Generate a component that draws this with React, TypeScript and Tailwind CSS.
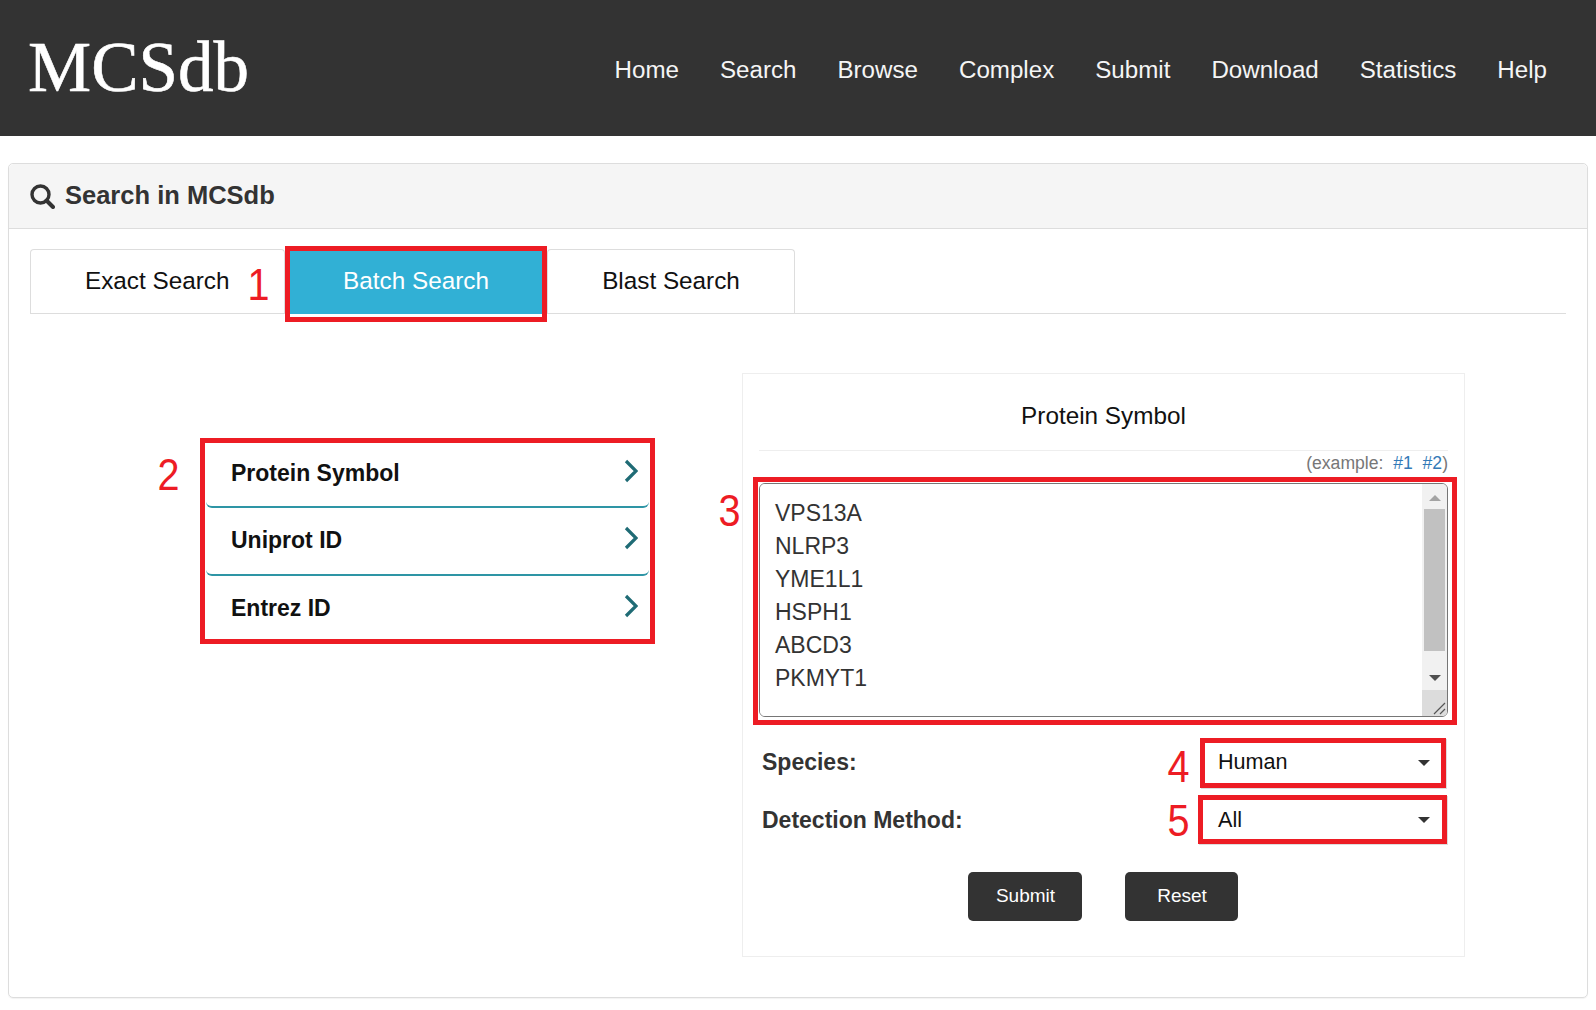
const navItems = ["Home", "Search", "Browse", "Complex", "Submit", "Download", "Statistics", "Help"];
const searchTypes = [
  { name: "Protein Symbol", rowClass: "h-[65px] pb-[3px] rounded-b-[6px] border-b-2 border-[#2e95a5]" },
  { name: "Uniprot ID", rowClass: "h-[68px] pb-[2px] rounded-b-[6px] border-b-2 border-[#2e95a5]" },
  { name: "Entrez ID", rowClass: "h-[63px] pt-[2px]" },
];
const sampleIds = ["VPS13A", "NLRP3", "YME1L1", "HSPH1", "ABCD3", "PKMYT1"];

function Mark({ children, className }: { children: string; className: string }) {
  return (
    <span className={`absolute scale-x-[0.88] text-[45px] font-normal leading-none text-[#ed1c24] ${className}`}>
      {children}
    </span>
  );
}

function Caret() {
  return (
    <svg width="12" height="6" viewBox="0 0 12 6" className="fill-[#333]">
      <path d="M0 0h12L6 6z" />
    </svg>
  );
}

function FakeScrollbar() {
  return (
    <div className="flex w-[25px] shrink-0 flex-col bg-[#f1f1f1]">
      <div className="flex h-[25px] items-start justify-center pl-px pt-[11px]">
        <svg width="12" height="6" viewBox="0 0 12 6" className="fill-[#a3a3a3]">
          <path d="M6 0l6 6H0z" />
        </svg>
      </div>
      <div className="ml-[2px] mr-[2px] h-[142px] bg-[#c1c1c1]" />
      <div className="flex flex-1 items-start justify-center pl-px pt-[24px]">
        <svg width="12" height="6" viewBox="0 0 12 6" className="fill-[#505050]">
          <path d="M0 0h12L6 6z" />
        </svg>
      </div>
      <div className="relative h-[26px] bg-[#dcdcdc]">
        <svg width="14" height="14" viewBox="0 0 14 14" className="absolute bottom-[1px] right-[1px] stroke-[#555]">
          <path d="M2 13L13 2M8 13l5-5" fill="none" strokeWidth="1.2" />
        </svg>
      </div>
    </div>
  );
}

export default function App() {
  return (
    <div className="min-h-[1010px] bg-white font-['Liberation_Sans',Arial,sans-serif] text-[#333]">
      <header className="flex h-[136px] items-center justify-between bg-[#333] pl-[28px] pr-[49px]">
        <div className="-mt-[2px] font-['Liberation_Serif',serif] text-[71px] leading-none text-white [-webkit-text-stroke:0.6px_white]">
          MCSdb
        </div>
        <nav className="flex gap-[41px] pt-[4px] text-[24.15px] text-[#f5f5f5]">
          {navItems.map((item) => (
            <a key={item}>{item}</a>
          ))}
        </nav>
      </header>

      <main className="mx-2 mt-[27px] h-[835px] rounded-[5px] border border-[#ddd] shadow-[0_1px_1px_rgba(0,0,0,0.05)]">
        <div className="flex h-[65px] items-center gap-[10px] rounded-t-[5px] border-b border-[#ddd] bg-[#f5f5f5] pl-[21px] text-[25.5px] font-bold">
          <svg width="25" height="25" viewBox="0 0 25 25" fill="none" className="stroke-[#333]">
            <circle cx="10.5" cy="10.5" r="8.5" strokeWidth="3.4" />
            <path d="M16.5 16.5l6.5 6.5" strokeWidth="4" strokeLinecap="round" />
          </svg>
          <span className="-mt-[2px]">Search in MCSdb</span>
        </div>

        <div className="pl-[21px] pr-[21px] pt-[20px]">
          <div className="flex h-[65px] items-start border-b border-[#ddd] text-[24.3px] text-[#111]">
            <div className="flex h-[64px] w-[255px] items-center rounded-t-[4px] border border-b-0 border-[#ddd] pl-[54px]">
              Exact Search
            </div>
            <div className="relative z-10 -mt-[3px] h-[76px] w-[262px] border-[5px] border-[#ed1c24] bg-white">
              <div className="flex h-[63px] items-center justify-center bg-[#31b0d5] pb-[3px] text-white">
                Batch Search
              </div>
              <Mark className="right-[calc(100%+19px)] top-[11px]">1</Mark>
            </div>
            <div className="flex h-[64px] w-[248px] items-center justify-center rounded-t-[4px] border border-b-0 border-[#ddd]">
              Blast Search
            </div>
          </div>

          <div className="flex items-start">
            <div className="relative ml-[170px] mt-[124px] h-[206px] w-[455px] border-[5px] border-[#ed1c24] px-[1px] text-[23px] font-bold text-[#111]">
              {searchTypes.map((item) => (
                <div key={item.name} className={`flex items-center justify-between pl-[25px] pr-[11px] ${item.rowClass}`}>
                  <span>{item.name}</span>
                  <svg width="14" height="24" viewBox="0 0 14 24" fill="none" className="-mt-[5px] stroke-[#1f6b75]">
                    <path d="M2 2l10 10L2 22" strokeWidth="3.2" />
                  </svg>
                </div>
              ))}
              <Mark className="right-[calc(100%+24px)] top-[9px]">2</Mark>
            </div>

            <div className="ml-[87px] mt-[59px] h-[584px] w-[723px] border border-[#eee] px-[16px]">
              <div className="flex h-[77px] items-center justify-center border-b border-[#eee] pt-[9px] text-[24.3px] text-[#111]">
                Protein Symbol
              </div>
              <div className="flex h-[26px] items-center justify-end pb-[2px] text-[17.6px] text-[#777]">
                (example:&nbsp;&nbsp;<a className="text-[#337ab7]">#1</a>&nbsp;&nbsp;<a className="text-[#337ab7]">#2</a>)
              </div>

              <div className="relative -ml-[6px] -mr-[9px] h-[248px] border-[5px] border-[#ed1c24] pb-[3px] pl-[1px] pr-[4px] pt-[1px]">
                <div className="flex h-[234px] overflow-hidden rounded-[6px] border border-[#767676]">
                  <textarea
                    readOnly
                    defaultValue={sampleIds.join("\n")}
                    className="min-w-0 flex-1 resize-none overflow-hidden bg-white pl-[15px] pt-[13px] text-[23px] leading-[33px] text-[#333] outline-none"
                  />
                  <FakeScrollbar />
                </div>
                <Mark className="right-[calc(100%+16px)] top-[6px]">3</Mark>
              </div>

              <div className="mt-[13px] flex h-[50px] items-center justify-between pl-[3px] pr-[2px] text-[23px] font-bold">
                <label className="-mt-[1px]">Species:</label>
                <div className="relative flex h-[50px] w-[246px] items-center justify-between border-[5px] border-[#ed1c24] pl-[13px] pr-[11px] text-[21.6px] font-normal text-[#111] shadow-[1px_1px_0_#ddd]">
                  <span className="-mt-[2px]">Human</span>
                  <Caret />
                  <Mark className="right-[calc(100%+14px)] top-[1px]">4</Mark>
                </div>
              </div>

              <div className="mt-[7px] flex h-[49px] items-center justify-between pl-[3px] pr-[1px] text-[23px] font-bold">
                <label className="mt-[2px]">Detection Method:</label>
                <div className="relative flex h-[49px] w-[249px] items-center justify-between border-[5px] border-[#ed1c24] pl-[15px] pr-[12px] text-[21.6px] font-normal text-[#111] shadow-[1px_1px_0_#ddd]">
                  <span className="mt-[2px]">All</span>
                  <Caret />
                  <Mark className="right-[calc(100%+12px)] top-[-2px]">5</Mark>
                </div>
              </div>

              <div className="mt-[28px] flex justify-center gap-[43px] pr-[2px] text-[19px] text-white">
                <button className="h-[49px] w-[114px] rounded-[5px] bg-[#333] pl-[2px]">Submit</button>
                <button className="h-[49px] w-[113px] rounded-[5px] bg-[#333] pl-[2px]">Reset</button>
              </div>
            </div>
          </div>
        </div>
      </main>
    </div>
  );
}
